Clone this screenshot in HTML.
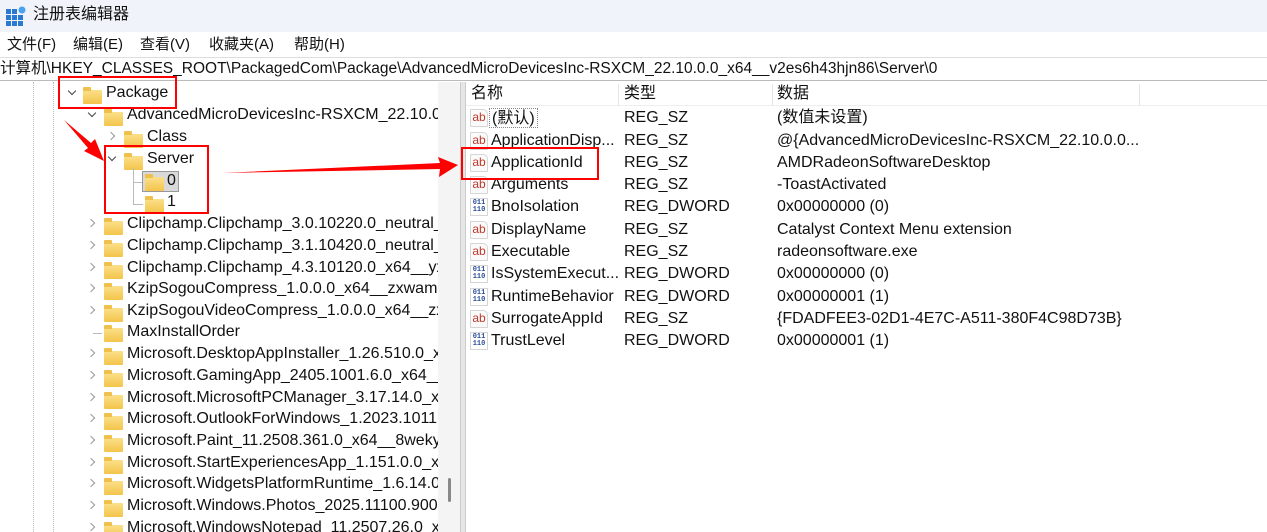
<!DOCTYPE html>
<html><head><meta charset="utf-8">
<style>
*{margin:0;padding:0;box-sizing:border-box}
body{width:1267px;height:532px;overflow:hidden;background:#fff;font-family:"Liberation Sans","Noto Sans CJK SC",sans-serif;font-size:16px;color:#111;position:relative}
.a{position:absolute;white-space:nowrap}
.t{line-height:20px;height:20px}
.fold{position:absolute;width:19px;height:14px;background:linear-gradient(#fbe08a,#f3c44b);border-radius:1px}
.fold:before{content:"";position:absolute;left:0;top:-3px;width:8px;height:4px;background:#efc04c;border-radius:1px 1px 0 0}
.chev{position:absolute;width:6px;height:6px;border-right:1.3px solid #444;border-bottom:1.3px solid #444}
.down{transform:rotate(45deg)}
.right{transform:rotate(-45deg);border-color:#999}
.ab{position:absolute;width:18px;height:18px;border:1px solid #d5d5d5;border-radius:1px 5px 1px 1px;background:#fafafa;font-size:12px;color:#c0392b;line-height:15px;text-align:center}
.bin{position:absolute;width:18px;height:18px;border:1px solid #d5d5d5;background:#fff;font-size:7px;color:#2a4d9b;line-height:7px;text-align:center;font-family:"Liberation Mono",monospace;padding-top:1px;font-weight:bold}
.red{position:absolute;border:2.5px solid #f00}
</style></head><body>
<div class="a" style="left:0;top:0;width:1267px;height:32px;background:#f0f3f9"></div>
<svg class="a" style="left:5px;top:5px" width="22" height="22"><rect x="1" y="4" width="5" height="5" fill="#2a7ad1"/><rect x="7" y="4" width="5" height="5" fill="#2a7ad1"/><rect x="1" y="10" width="5" height="5" fill="#2a7ad1"/><rect x="7" y="10" width="5" height="5" fill="#2a7ad1"/><rect x="13" y="10" width="5" height="5" fill="#2a7ad1"/><rect x="1" y="16" width="5" height="5" fill="#2a7ad1"/><rect x="7" y="16" width="5" height="5" fill="#2a7ad1"/><rect x="13" y="16" width="5" height="5" fill="#2a7ad1"/><circle cx="17" cy="5" r="3.5" fill="#4aa3ee"/></svg>
<div class="a" style="left:33px;top:4px;font-size:16px;line-height:22px">注册表编辑器</div>
<div class="a" style="left:0;top:32px;width:1267px;height:25px;background:#fff"></div>
<div class="a" style="left:7px;top:35px;font-size:15px;line-height:20px">文件(F)</div>
<div class="a" style="left:73px;top:35px;font-size:15px;line-height:20px">编辑(E)</div>
<div class="a" style="left:140px;top:35px;font-size:15px;line-height:20px">查看(V)</div>
<div class="a" style="left:209px;top:35px;font-size:15px;line-height:20px">收藏夹(A)</div>
<div class="a" style="left:294px;top:35px;font-size:15px;line-height:20px">帮助(H)</div>
<div class="a" style="left:0;top:57px;width:1267px;height:24px;border-top:1px solid #ddd;border-bottom:1px solid #bbb"></div>
<div class="a" style="left:0;top:59px;font-size:15.5px;line-height:20px">计算机\HKEY_CLASSES_ROOT\PackagedCom\Package\AdvancedMicroDevicesInc-RSXCM_22.10.0.0_x64__v2es6h43hjn86\Server\0</div>
<div class="a" style="left:33px;top:82px;height:450px;border-left:1px dotted #bbb"></div>
<div class="a" style="left:53px;top:82px;height:450px;border-left:1px dotted #bbb"></div>
<div class="a" style="left:438px;top:82px;width:22px;height:450px;background:#f4f4f4"></div>
<div class="a" style="left:448px;top:478px;width:3px;height:24px;background:#888;border-radius:2px"></div>
<div class="a" style="left:460px;top:82px;width:6px;height:450px;background:#e6e6e6;border-left:1px solid #ccc;border-right:1px solid #ccc"></div>
<div style="position:absolute;left:0;top:84px;width:438px;height:448px;overflow:hidden">
<div class="chev down" style="left:69px;top:4px"></div><div class="fold" style="left:83px;top:6px"></div><div class="a t" style="left:106px;top:-1px">Package</div>
<div class="chev down" style="left:89px;top:26px"></div><div class="fold" style="left:104px;top:28px"></div><div class="a t" style="left:127px;top:21px">AdvancedMicroDevicesInc-RSXCM_22.10.0.0_x64</div>
<div class="chev right" style="left:108px;top:49px"></div><div class="fold" style="left:124px;top:50px"></div><div class="a t" style="left:147px;top:43px">Class</div>
<div class="chev down" style="left:109px;top:70px"></div><div class="fold" style="left:124px;top:72px"></div><div class="a t" style="left:147px;top:65px">Server</div>
<div class="a" style="left:133px;top:84px;height:36px;border-left:1px solid #bbb"></div>
<div class="a" style="left:133px;top:98px;width:10px;border-top:1px solid #bbb"></div>
<div class="a" style="left:133px;top:120px;width:10px;border-top:1px solid #bbb"></div>
<div class="a" style="left:142px;top:87px;width:37px;height:21px;background:#d9d9d9;border:1px solid #999"></div>
<div class="fold" style="left:145px;top:93px"></div><div class="a t" style="left:167px;top:87px">0</div>
<div class="fold" style="left:145px;top:115px"></div><div class="a t" style="left:167px;top:108px">1</div>
<div class="chev right" style="left:88px;top:136px"></div><div class="fold" style="left:104px;top:137px"></div><div class="a t" style="left:127px;top:130px">Clipchamp.Clipchamp_3.0.10220.0_neutral__yxz</div>
<div class="chev right" style="left:88px;top:158px"></div><div class="fold" style="left:104px;top:159px"></div><div class="a t" style="left:127px;top:152px">Clipchamp.Clipchamp_3.1.10420.0_neutral__yxz</div>
<div class="chev right" style="left:88px;top:180px"></div><div class="fold" style="left:104px;top:181px"></div><div class="a t" style="left:127px;top:174px">Clipchamp.Clipchamp_4.3.10120.0_x64__yxz26nh</div>
<div class="chev right" style="left:88px;top:201px"></div><div class="fold" style="left:104px;top:202px"></div><div class="a t" style="left:127px;top:195px">KzipSogouCompress_1.0.0.0_x64__zxwamgeep</div>
<div class="chev right" style="left:88px;top:223px"></div><div class="fold" style="left:104px;top:224px"></div><div class="a t" style="left:127px;top:217px">KzipSogouVideoCompress_1.0.0.0_x64__zxwamg</div>
<div class="a" style="left:93px;top:249px;width:9px;border-top:1px solid #bbb"></div><div class="fold" style="left:104px;top:244px"></div><div class="a t" style="left:127px;top:238px">MaxInstallOrder</div>
<div class="chev right" style="left:88px;top:266px"></div><div class="fold" style="left:104px;top:267px"></div><div class="a t" style="left:127px;top:260px">Microsoft.DesktopAppInstaller_1.26.510.0_x64_</div>
<div class="chev right" style="left:88px;top:288px"></div><div class="fold" style="left:104px;top:289px"></div><div class="a t" style="left:127px;top:282px">Microsoft.GamingApp_2405.1001.6.0_x64__8wek</div>
<div class="chev right" style="left:88px;top:310px"></div><div class="fold" style="left:104px;top:311px"></div><div class="a t" style="left:127px;top:304px">Microsoft.MicrosoftPCManager_3.17.14.0_x64</div>
<div class="chev right" style="left:88px;top:331px"></div><div class="fold" style="left:104px;top:332px"></div><div class="a t" style="left:127px;top:325px">Microsoft.OutlookForWindows_1.2023.1011</div>
<div class="chev right" style="left:88px;top:353px"></div><div class="fold" style="left:104px;top:354px"></div><div class="a t" style="left:127px;top:347px">Microsoft.Paint_11.2508.361.0_x64__8wekyb</div>
<div class="chev right" style="left:88px;top:375px"></div><div class="fold" style="left:104px;top:376px"></div><div class="a t" style="left:127px;top:369px">Microsoft.StartExperiencesApp_1.151.0.0_x64</div>
<div class="chev right" style="left:88px;top:396px"></div><div class="fold" style="left:104px;top:397px"></div><div class="a t" style="left:127px;top:390px">Microsoft.WidgetsPlatformRuntime_1.6.14.0</div>
<div class="chev right" style="left:88px;top:418px"></div><div class="fold" style="left:104px;top:419px"></div><div class="a t" style="left:127px;top:412px">Microsoft.Windows.Photos_2025.11100.9001</div>
<div class="chev right" style="left:88px;top:440px"></div><div class="fold" style="left:104px;top:441px"></div><div class="a t" style="left:127px;top:434px">Microsoft.WindowsNotepad_11.2507.26.0_x64</div>
</div>
<div class="a" style="left:466px;top:82px;width:801px;height:24px;border-bottom:1px solid #eee"></div>
<div class="a" style="left:618px;top:84px;height:22px;border-left:1px solid #e5e5e5"></div>
<div class="a" style="left:772px;top:84px;height:22px;border-left:1px solid #e5e5e5"></div>
<div class="a" style="left:1139px;top:84px;height:22px;border-left:1px solid #e5e5e5"></div>
<div class="a t" style="left:471px;top:84px">名称</div><div class="a t" style="left:624px;top:84px">类型</div><div class="a t" style="left:777px;top:84px">数据</div>
<div class="ab" style="left:470px;top:109px">ab</div><div class="a t" style="left:489px;top:108px;border:1px dotted #888;padding:0 2px">(默认)</div><div class="a t" style="left:624px;top:108px">REG_SZ</div><div class="a t" style="left:777px;top:108px">(数值未设置)</div>
<div class="ab" style="left:470px;top:132px">ab</div><div class="a t" style="left:491px;top:131px">ApplicationDisp...</div><div class="a t" style="left:624px;top:131px">REG_SZ</div><div class="a t" style="left:777px;top:131px">@{AdvancedMicroDevicesInc-RSXCM_22.10.0.0...</div>
<div class="ab" style="left:470px;top:154px">ab</div><div class="a t" style="left:491px;top:153px">ApplicationId</div><div class="a t" style="left:624px;top:153px">REG_SZ</div><div class="a t" style="left:777px;top:153px">AMDRadeonSoftwareDesktop</div>
<div class="ab" style="left:470px;top:176px">ab</div><div class="a t" style="left:491px;top:175px">Arguments</div><div class="a t" style="left:624px;top:175px">REG_SZ</div><div class="a t" style="left:777px;top:175px">-ToastActivated</div>
<div class="bin" style="left:470px;top:198px">011<br>110</div><div class="a t" style="left:491px;top:197px">BnoIsolation</div><div class="a t" style="left:624px;top:197px">REG_DWORD</div><div class="a t" style="left:777px;top:197px">0x00000000 (0)</div>
<div class="ab" style="left:470px;top:221px">ab</div><div class="a t" style="left:491px;top:220px">DisplayName</div><div class="a t" style="left:624px;top:220px">REG_SZ</div><div class="a t" style="left:777px;top:220px">Catalyst Context Menu extension</div>
<div class="ab" style="left:470px;top:243px">ab</div><div class="a t" style="left:491px;top:242px">Executable</div><div class="a t" style="left:624px;top:242px">REG_SZ</div><div class="a t" style="left:777px;top:242px">radeonsoftware.exe</div>
<div class="bin" style="left:470px;top:265px">011<br>110</div><div class="a t" style="left:491px;top:264px">IsSystemExecut...</div><div class="a t" style="left:624px;top:264px">REG_DWORD</div><div class="a t" style="left:777px;top:264px">0x00000000 (0)</div>
<div class="bin" style="left:470px;top:288px">011<br>110</div><div class="a t" style="left:491px;top:287px;width:128px;overflow:hidden">RuntimeBehavior</div><div class="a t" style="left:624px;top:287px">REG_DWORD</div><div class="a t" style="left:777px;top:287px">0x00000001 (1)</div>
<div class="ab" style="left:470px;top:310px">ab</div><div class="a t" style="left:491px;top:309px">SurrogateAppId</div><div class="a t" style="left:624px;top:309px">REG_SZ</div><div class="a t" style="left:777px;top:309px">{FDADFEE3-02D1-4E7C-A511-380F4C98D73B}</div>
<div class="bin" style="left:470px;top:332px">011<br>110</div><div class="a t" style="left:491px;top:331px">TrustLevel</div><div class="a t" style="left:624px;top:331px">REG_DWORD</div><div class="a t" style="left:777px;top:331px">0x00000001 (1)</div>
<div class="red" style="left:58px;top:76px;width:119px;height:33px"></div>
<div class="red" style="left:104px;top:145px;width:105px;height:69px"></div>
<div class="red" style="left:461px;top:147px;width:138px;height:33px"></div>
<svg class="a" style="left:0;top:0" width="1267" height="532">
<polygon points="222,173 440,163 438,157 458,165 439,177 440,169" fill="#f00"/>
<polygon points="64,120 91,143 95,139 104,161 84,151 88,148" fill="#f00"/>
</svg>
</body></html>
